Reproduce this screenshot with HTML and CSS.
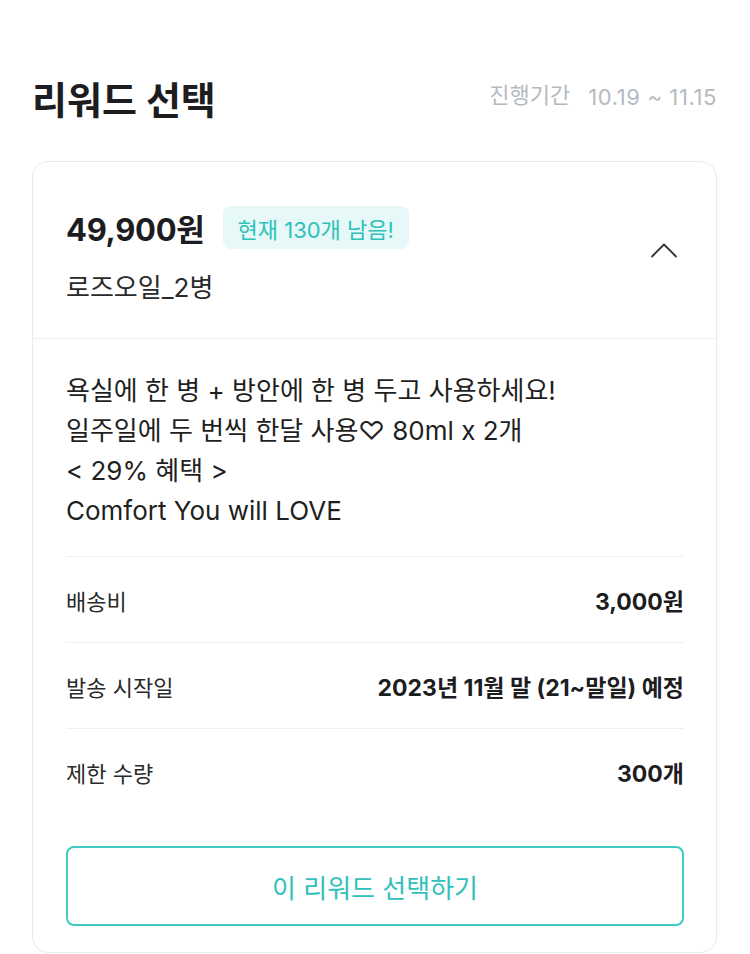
FILE: index.html
```html
<!DOCTYPE html>
<html lang="ko">
<head>
<meta charset="utf-8">
<title>리워드 선택</title>
<link rel="stylesheet" href="styles.css">
</head>
<body>
<div class="page">
  <header class="head">
    <h1 class="title">리워드 선택</h1>
    <div class="period"><span class="period-label">진행기간</span><span class="period-date">10.19 ~ 11.15</span></div>
  </header>
  <section class="card">
    <div class="card-top">
      <div class="card-top-text">
        <div class="price-row">
          <span class="price">49,900원</span>
          <span class="badge">현재 130개 남음!</span>
        </div>
        <div class="name">로즈오일_2병</div>
      </div>
      <svg class="chevron" width="28" height="16" viewBox="0 0 28 16" aria-hidden="true">
        <path d="M2 14.5 L14 2.5 L26 14.5" fill="none" stroke="#333" stroke-width="1.8" stroke-linecap="round" stroke-linejoin="round"/>
      </svg>
    </div>
    <div class="card-body">
      <div class="desc">
        <p>욕실에 한 병 + 방안에 한 병 두고 사용하세요!</p>
        <p>일주일에 두 번씩 한달 사용♡ 80ml x 2개</p>
        <p>&lt; 29% 혜택 &gt;</p>
        <p>Comfort You will LOVE</p>
      </div>
      <div class="info-row"><span class="info-label">배송비</span><span class="info-value">3,000원</span></div>
      <div class="info-row"><span class="info-label">발송 시작일</span><span class="info-value">2023년 11월 말 (21~말일) 예정</span></div>
      <div class="info-row"><span class="info-label">제한 수량</span><span class="info-value">300개</span></div>
      <button class="select-btn" type="button">이 리워드 선택하기</button>
    </div>
  </section>
</div>
</body>
</html>
```

FILE: styles.css
```css
* { box-sizing: border-box; }
html, body { margin: 0; padding: 0; background: #fff; }
body {
  font-family: Inter, "Noto Sans CJK KR", "Noto Sans", sans-serif;
  color: #222;
  -webkit-font-smoothing: antialiased;
}
.page { padding: 0 33px 0 32px; }
.head {
  display: flex;
  align-items: center;
  justify-content: space-between;
  height: 161px;
  padding-top: 33px;
}
.title {
  margin: 0;
  font-size: 38px;
  font-weight: 700;
  color: #1d1d1f;
}
.period {
  display: flex;
  align-items: center;
  gap: 18px;
  font-size: 22px;
  line-height: 30px;
  color: #b5bac0;
}
.period-label { position: relative; top: -2px; }
.period-date { letter-spacing: 0.6px; }
.card {
  border: 1.5px solid #e9eaec;
  border-radius: 16px;
  overflow: hidden;
}
.card-top {
  display: flex;
  align-items: center;
  justify-content: space-between;
  height: 177px;
  padding: 10px 38px 0 33px;
  border-bottom: 1.5px solid #eeeff1;
}
.card-top-text { display: flex; flex-direction: column; gap: 20px; }
.price-row { display: flex; align-items: center; gap: 18px; }
.price {
  font-size: 31px;
  font-weight: 700;
  color: #1d1d1f;
  letter-spacing: -0.3px;
}
.badge {
  display: inline-flex;
  align-items: center;
  height: 43px;
  padding: 0 15px;
  border-radius: 8px;
  background: #e6f8f7;
  color: #2fc1ba;
  font-size: 22px;
}
.name { font-size: 26px; line-height: 35px; color: #2a2a2a; }
.chevron { display: block; margin-bottom: 10px; }
.card-body { padding: 0 32px 26px 33px; }
.desc {
  padding: 32px 0 25px;
  border-bottom: 1.5px solid #eeeff1;
}
.desc p {
  margin: 0;
  font-size: 26px;
  line-height: 40px;
  color: #1f1f1f;
}
.info-row {
  display: flex;
  align-items: center;
  justify-content: space-between;
  height: 86px;
  border-bottom: 1.5px solid #eeeff1;
  font-size: 22px;
}
.info-row:last-of-type { border-bottom: none; }
.info-label { color: #2a2a2a; }
.info-value { font-weight: 700; color: #1d1d1f; font-size: 23px; }
.select-btn {
  display: flex;
  align-items: center;
  justify-content: center;
  width: 100%;
  height: 80px;
  margin-top: 31px;
  border: 2px solid #40c8c2;
  border-radius: 8px;
  background: #fff;
  color: #2fc1ba;
  font-family: Inter, "Noto Sans CJK KR", "Noto Sans", sans-serif;
  font-size: 26px;
}
```
